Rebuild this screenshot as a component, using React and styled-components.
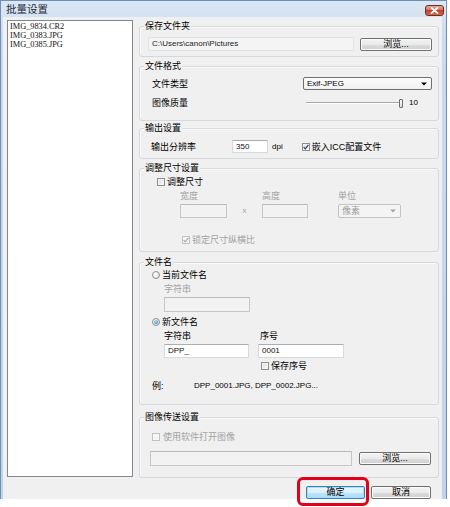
import React from 'react';
import styled, { createGlobalStyle } from 'styled-components';

const Global = createGlobalStyle`
  html, body { margin: 0; padding: 0; background: #fff; }
  body {
    width: 450px; height: 507px; overflow: hidden;
    font-family: "Liberation Sans", "Noto Sans CJK SC", sans-serif;
    color: #000;
  }
`;

const Stage = styled.div`
  position: relative;
  width: 450px;
  height: 507px;
`;

const Window = styled.div`
  width: 447px;
  height: 499px;
  box-sizing: border-box;
  border: 1px solid #6f8fb4;
  border-bottom: none;
  background: linear-gradient(180deg, #dbe7f4 0px, #c9dbee 40px, #bfd4ea 100%);
  display: flex;
  flex-direction: column;
`;

const TitleBar = styled.div`
  height: 16px;
  flex: none;
  display: flex;
  align-items: center;
  justify-content: space-between;
  padding: 0 2px 0 5px;
`;

const Title = styled.span`
  font-family: "Noto Sans CJK SC", sans-serif;
  font-size: 10.5px;
  line-height: 12px;
  color: #1e2a38;
`;

const CloseBtn = styled.div`
  width: 19px;
  height: 11px;
  box-sizing: border-box;
  border: 1px solid #6e2b22;
  border-radius: 3px;
  background: linear-gradient(180deg, #e9a899 0%, #d2725c 45%, #c0412a 50%, #d06a4e 100%);
  display: flex;
  align-items: center;
  justify-content: center;
  margin-top: 2px;
`;

const Client = styled.div`
  flex: 1;
  margin: 0 4px 0 2px;
  background: #f0f0f0;
  display: flex;
  gap: 6px;
  padding: 3px 3px 0 4px;
  box-sizing: border-box;
  min-height: 0;
`;

const FileList = styled.div`
  width: 126px;
  height: 457px;
  box-sizing: border-box;
  flex: none;
  border: 1px solid #828790;
  background: #fff;
  padding: 1px 2px;
`;

const FileItem = styled.div`
  font-family: "Liberation Serif", serif;
  font-size: 8.3px;
  line-height: 9px;
  color: #111;
`;

const Column = styled.div`
  width: 300px;
  flex: none;
  display: flex;
  flex-direction: column;
  margin-top: 1px;
`;

const Group = styled.fieldset`
  margin: ${p => p.$mt || 0}px 0 0 0;
  padding: 0;
  height: ${p => p.$h}px;
  box-sizing: border-box;
  border: 1px solid #d5d9dd;
  border-radius: 3px;
  box-shadow: inset 1px 1px 0 #fbfbfb;
  min-width: 0;
`;

const Legend = styled.legend`
  margin-left: 4px;
  padding: 0 1px;
  font-size: 9px;
  line-height: 10px;
  background: #f0f0f0;
  color: #000;
`;

const GroupBody = styled.div`
  padding: ${p => p.$pad};
  display: flex;
  flex-direction: column;
  align-items: flex-start;
  gap: ${p => p.$gap || 0}px;
`;

const Row = styled.div`
  display: flex;
  align-items: center;
  align-self: stretch;
  justify-content: ${p => p.$justify || 'flex-start'};
  gap: ${p => p.$gap || 0}px;
  margin-top: ${p => p.$mt || 0}px;
  margin-left: ${p => p.$ml || 0}px;
`;

const Label = styled.span`
  font-size: 9px;
  line-height: 10px;
  color: ${p => (p.$disabled ? '#a3a3a3' : '#000')};
  width: ${p => (p.$w ? `${p.$w}px` : 'auto')};
  flex: none;
  white-space: nowrap;
  padding-left: ${p => p.$pl || 0}px;
  margin-top: ${p => p.$mt || 0}px;
`;

const Small = styled.span`
  font-size: 8px;
  line-height: 10px;
  color: ${p => (p.$disabled ? '#a3a3a3' : '#000')};
  margin-left: ${p => p.$ml || 0}px;
  white-space: nowrap;
`;

const PathBox = styled.div`
  flex: 1;
  height: 14px;
  box-sizing: border-box;
  border: 1px solid #e3e3e3;
  background: #f4f4f4;
  font-size: 8px;
  line-height: 12px;
  padding-left: 3px;
  color: #222;
  white-space: nowrap;
`;

const Field = styled.div`
  box-sizing: border-box;
  width: ${p => (p.$w ? `${p.$w}px` : 'auto')};
  flex: ${p => (p.$w ? 'none' : '1')};
  height: ${p => p.$h || 14}px;
  border: 1px solid ${p => (p.$disabled ? '#c6c6c6' : '#d6d9de')};
  border-top-color: ${p => (p.$disabled ? '#b9b9b9' : '#abadb3')};
  background: ${p => (p.$disabled ? '#f2f2f2' : '#fff')};
  border-radius: 1px;
  font-size: 8px;
  line-height: ${p => (p.$h || 14) - 2}px;
  padding-left: 3px;
  color: #111;
  margin-top: ${p => p.$mt || 0}px;
  margin-left: ${p => p.$ml || 0}px;
`;

const Button = styled.div`
  box-sizing: border-box;
  width: ${p => p.$w}px;
  height: 13px;
  flex: none;
  border: 1px solid ${p => (p.$default ? '#3c7fb1' : '#707070')};
  border-radius: 2px;
  background: ${p =>
    p.$default
      ? 'linear-gradient(180deg, #eaf6fd 0%, #d9f0fc 50%, #bee6fd 51%, #a7d9f5 100%)'
      : 'linear-gradient(180deg, #f2f2f2 0%, #ebebeb 50%, #dddddd 51%, #cfcfcf 100%)'};
  box-shadow: inset 0 0 0 1px ${p => (p.$default ? '#a6e1fc' : '#fcfcfc')};
  font-size: 9px;
  line-height: 11px;
  text-align: center;
  color: #000;
`;

const SelectBox = styled.div`
  box-sizing: border-box;
  width: ${p => p.$w}px;
  height: ${p => p.$h || 13}px;
  flex: none;
  border: 1px solid ${p => (p.$disabled ? '#c3c3c3' : '#707070')};
  border-radius: 2px;
  background: ${p => (p.$disabled ? '#f4f4f4' : 'linear-gradient(180deg, #fdfdfd, #f1f1f1)')};
  display: flex;
  align-items: center;
  justify-content: space-between;
  padding: 0 4px 0 3px;
  font-size: ${p => (p.$cjk ? 9 : 8)}px;
  line-height: 10px;
  color: ${p => (p.$disabled ? '#9c9c9c' : '#000')};
`;

const Slider = styled.div`
  display: flex;
  align-items: center;
  padding-right: 14px;
`;

const Track = styled.div`
  width: 93px;
  height: 1px;
  background: #a8a8a8;
  border-bottom: 1px solid #fff;
`;

const Thumb = styled.div`
  width: 4px;
  height: 9px;
  box-sizing: border-box;
  border: 1px solid #6f6f6f;
  border-radius: 1px;
  background: linear-gradient(180deg, #ffffff, #dadada);
`;

const Item = styled.label`
  display: flex;
  align-items: center;
  gap: ${p => p.$gap || 2}px;
  height: 10px;
  margin-top: ${p => p.$mt || 0}px;
  margin-left: ${p => p.$ml || 0}px;
  font-size: 9px;
  line-height: 10px;
  color: ${p => (p.$disabled ? '#a3a3a3' : '#000')};
  white-space: nowrap;
`;

const Box = styled.span`
  width: 8px;
  height: 8px;
  box-sizing: border-box;
  flex: none;
  border: 1px solid ${p => (p.$disabled ? '#c2c2c2' : '#8e8f8f')};
  background: ${p => (p.$disabled ? '#f4f4f4' : 'linear-gradient(135deg, #dcdcdc, #fbfbfb)')};
  box-shadow: inset 0 0 0 1px ${p => (p.$disabled ? '#f8f8f8' : '#f4f4f4')};
  display: flex;
  align-items: center;
  justify-content: center;
`;

const RadioDot = styled.span`
  width: 8px;
  height: 8px;
  box-sizing: border-box;
  flex: none;
  border-radius: 50%;
  border: 1px solid #8e8f8f;
  background: radial-gradient(circle at 35% 35%, #ffffff, #d8d8d8);
  display: flex;
  align-items: center;
  justify-content: center;
`;

const RadioInner = styled.span`
  width: 4px;
  height: 4px;
  border-radius: 50%;
  background: radial-gradient(circle at 40% 35%, #b8e0fa, #1b6fc2);
`;

const SizeGrid = styled.div`
  display: grid;
  grid-template-columns: 47px 35px 46px 30px 63px;
  grid-template-rows: 10px 14px;
  row-gap: 3px;
  align-items: center;
  margin: 4px 0 0 23px;
`;

const NameGrid = styled.div`
  display: grid;
  grid-template-columns: 94px 86px;
  grid-template-rows: 10px 14px 10px;
  row-gap: 3px;
  align-items: center;
  margin: 4px 0 0 12px;
`;

const Times = styled.span`
  font-size: 8px;
  color: #a3a3a3;
  text-align: center;
  line-height: 10px;
`;

const Footer = styled.div`
  display: flex;
  justify-content: flex-end;
  gap: 6px;
  margin-top: 8px;
  padding-right: 8px;
`;

const Highlight = styled.div`
  position: absolute;
  left: 297px;
  top: 477px;
  width: 72px;
  height: 29px;
  box-sizing: border-box;
  border: 3px solid #e2001a;
  border-radius: 6px;
  pointer-events: none;
`;

const CheckMark = ({ color }) => (
  <svg width="6" height="6" viewBox="0 0 6 6">
    <path d="M0.6 3.1 L2.3 4.8 L5.4 0.9" fill="none" stroke={color} strokeWidth="1.2" />
  </svg>
);

const Check = ({ label, checked, disabled, ...rest }) => (
  <Item $disabled={disabled} {...rest}>
    <Box $disabled={disabled}>{checked && <CheckMark color={disabled ? '#a8a8a8' : '#2b3f7a'} />}</Box>
    <span>{label}</span>
  </Item>
);

const Radio = ({ label, selected, ...rest }) => (
  <Item {...rest}>
    <RadioDot>{selected && <RadioInner />}</RadioDot>
    <span>{label}</span>
  </Item>
);

const Arrow = ({ color }) => (
  <svg width="6" height="4" viewBox="0 0 6 4">
    <path d="M0 0.5 H6 L3 3.5 Z" fill={color} />
  </svg>
);

export default function App() {
  return (
    <>
      <Global />
      <Stage>
        <Window>
          <TitleBar>
            <Title>批量设置</Title>
            <CloseBtn>
              <svg width="9" height="7" viewBox="0 0 9 7">
                <path d="M1.5 1 L7.5 6 M7.5 1 L1.5 6" stroke="#fff" strokeWidth="1.7" strokeLinecap="round" />
              </svg>
            </CloseBtn>
          </TitleBar>
          <Client>
            <FileList>
              <FileItem>IMG_9834.CR2</FileItem>
              <FileItem>IMG_0383.JPG</FileItem>
              <FileItem>IMG_0385.JPG</FileItem>
            </FileList>
            <Column>
              <Group $h={36}>
                <Legend>保存文件夹</Legend>
                <GroupBody $pad="6px 6px 0 8px">
                  <Row $gap={6}>
                    <PathBox>C:\Users\canon\Pictures</PathBox>
                    <Button $w={72}>浏览...</Button>
                  </Row>
                </GroupBody>
              </Group>

              <Group $mt={4} $h={60}>
                <Legend>文件格式</Legend>
                <GroupBody $pad="6px 6px 0 12px" $gap={8}>
                  <Row $justify="space-between">
                    <Label>文件类型</Label>
                    <SelectBox $w={129}>
                      <span>Exif-JPEG</span>
                      <Arrow color="#000" />
                    </SelectBox>
                  </Row>
                  <Row $justify="space-between">
                    <Label>图像质量</Label>
                    <Slider>
                      <Track />
                      <Thumb />
                      <Small $ml={6}>10</Small>
                    </Slider>
                  </Row>
                </GroupBody>
              </Group>

              <Group $mt={2} $h={36}>
                <Legend>输出设置</Legend>
                <GroupBody $pad="7px 0 0 11px">
                  <Row>
                    <Label $w={81}>输出分辨率</Label>
                    <Field $w={36} $h={13}>350</Field>
                    <Small $ml={4}>dpi</Small>
                    <Check label="嵌入ICC配置文件" checked $ml={19} />
                  </Row>
                </GroupBody>
              </Group>

              <Group $mt={4} $h={89}>
                <Legend>调整尺寸设置</Legend>
                <GroupBody $pad="4px 0 0 17px">
                  <Check label="调整尺寸" />
                  <SizeGrid>
                    <Label $disabled>宽度</Label>
                    <span />
                    <Label $disabled>高度</Label>
                    <span />
                    <Label $disabled>单位</Label>
                    <Field $disabled $w={47} />
                    <Times>x</Times>
                    <Field $disabled $w={46} />
                    <span />
                    <SelectBox $disabled $cjk $w={63} $h={14}>
                      <span>像素</span>
                      <Arrow color="#a8a8a8" />
                    </SelectBox>
                  </SizeGrid>
                  <Check label="锁定尺寸纵横比" checked disabled $mt={17} $ml={25} />
                </GroupBody>
              </Group>

              <Group $mt={5} $h={148}>
                <Legend>文件名</Legend>
                <GroupBody $pad="3px 0 0 12px">
                  <Radio label="当前文件名" />
                  <Label $disabled $mt={4} style={{ marginLeft: 12 }}>字符串</Label>
                  <Field $disabled $w={86} $h={15} $mt={3} $ml={12} />
                  <Radio label="新文件名" selected $mt={5} />
                  <NameGrid>
                    <Label>字符串</Label>
                    <Label $pl={2}>序号</Label>
                    <Field $w={85}>DPP_</Field>
                    <Field $w={86}>0001</Field>
                    <span />
                    <Check label="保存序号" $ml={3} />
                  </NameGrid>
                  <Row $mt={10}>
                    <Label $w={42}>例:</Label>
                    <Small>DPP_0001.JPG, DPP_0002.JPG...</Small>
                  </Row>
                </GroupBody>
              </Group>

              <Group $mt={7} $h={66}>
                <Legend>图像传送设置</Legend>
                <GroupBody $pad="10px 7px 0 10px">
                  <Check label="使用软件打开图像" disabled $ml={2} $gap={3} />
                  <Row $gap={7} $mt={9}>
                    <Field $disabled $h={15} />
                    <Button $w={72}>浏览...</Button>
                  </Row>
                </GroupBody>
              </Group>

              <Footer>
                <Button $w={59} $default>确定</Button>
                <Button $w={60}>取消</Button>
              </Footer>
            </Column>
          </Client>
        </Window>
        <Highlight />
      </Stage>
    </>
  );
}
